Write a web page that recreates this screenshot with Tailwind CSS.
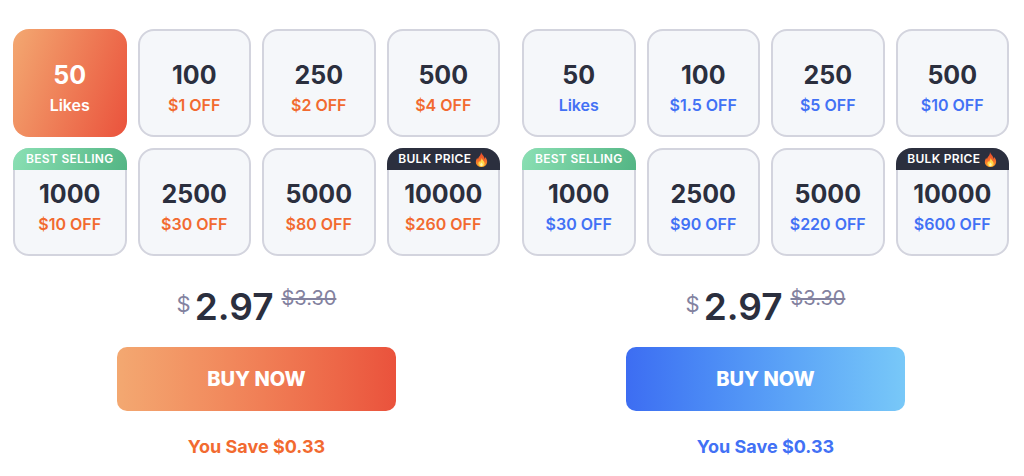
<!DOCTYPE html>
<html lang="en">
<head>
<meta charset="utf-8">
<meta name="viewport" content="width=device-width, initial-scale=1">
<title>Buy Likes</title>
<script src="https://cdn.jsdelivr.net/npm/@tailwindcss/browser@4"></script>
</head>
<body class="bg-white font-['Inter',sans-serif] text-[#2b2f3e]">
<svg class="absolute size-0" aria-hidden="true">
  <defs>
    <linearGradient id="flame-fill" x1="0" y1="0" x2="0" y2="1">
      <stop offset="0" stop-color="#e8452c"/><stop offset="0.6" stop-color="#f5702a"/><stop offset="1" stop-color="#fba52b"/>
    </linearGradient>
    <symbol id="flame" viewBox="0 0 24 28">
      <path fill="url(#flame-fill)" d="M11 0c1 4 5 6 6 10 .3 1.500 0 3 0 3 1-.6 1.600-2 1.500-3.600C21 12 23 15 22.500 19c-.6 5.500-5 9-10.500 9S1.800 24.500 1.500 19.500C1.200 15.500 3 13 4 10.500c.7 1 .8 2.300 1.500 3.200C6 9 11.500 6.500 11 0z"/>
      <path fill="#ffd84a" d="M12.500 11c.2 3.200 4.800 5.500 5.300 9.800.3 3.700-2.400 6.200-5.800 6.200s-6-2.300-5.800-5.800c.1-1.700.9-3 1.800-4.200.3 1 .7 1.600 1.400 2 .1-3 2.900-4.500 3.100-8z"/>
      <path fill="#fff3b0" d="M12 19c.4 1.800 2.400 2.700 2.400 4.800 0 1.600-1.100 2.700-2.500 2.700s-2.500-1.100-2.500-2.600c0-2 2.200-2.900 2.600-4.900z"/>
    </symbol>
  </defs>
</svg>
<main class="grid grid-cols-2 gap-[22px] pt-[29px] pr-[15px] pl-[13px]">

  <section aria-label="Likes, orange plan" class="flex flex-col items-center">
    <div class="grid w-full grid-cols-4 gap-[11px] text-base leading-6 font-semibold text-[#f26a30]">
      <button type="button" aria-pressed="true" class="flex h-[108px] flex-col items-center justify-center rounded-2xl bg-linear-[110deg] from-[#f3a871] to-[#ea523c] pt-[7px] text-white"><span class="text-[25px] leading-9 font-bold">50</span><span>Likes</span></button>
      <button type="button" class="flex h-[108px] flex-col items-center justify-center rounded-2xl border-2 border-[#d3d4de] bg-[#f5f7fa] pt-[7px]"><span class="text-[25px] leading-9 font-bold text-[#2b2f3e]">100</span><span>$1 OFF</span></button>
      <button type="button" class="flex h-[108px] flex-col items-center justify-center rounded-2xl border-2 border-[#d3d4de] bg-[#f5f7fa] pt-[7px]"><span class="text-[25px] leading-9 font-bold text-[#2b2f3e]">250</span><span>$2 OFF</span></button>
      <button type="button" class="flex h-[108px] flex-col items-center justify-center rounded-2xl border-2 border-[#d3d4de] bg-[#f5f7fa] pt-[7px]"><span class="text-[25px] leading-9 font-bold text-[#2b2f3e]">500</span><span>$4 OFF</span></button>
      <button type="button" class="relative flex h-[108px] flex-col items-center justify-center rounded-2xl border-2 border-[#d3d4de] bg-[#f5f7fa] pt-[7px]"><span class="absolute -inset-x-0.5 -top-0.5 flex h-[22px] items-center justify-center rounded-t-2xl bg-linear-[110deg] from-[#8be0b4] to-[#53b584] text-xs tracking-wide whitespace-nowrap text-white">BEST SELLING</span><span class="text-[25px] leading-9 font-bold text-[#2b2f3e]">1000</span><span>$10 OFF</span></button>
      <button type="button" class="flex h-[108px] flex-col items-center justify-center rounded-2xl border-2 border-[#d3d4de] bg-[#f5f7fa] pt-[7px]"><span class="text-[25px] leading-9 font-bold text-[#2b2f3e]">2500</span><span>$30 OFF</span></button>
      <button type="button" class="flex h-[108px] flex-col items-center justify-center rounded-2xl border-2 border-[#d3d4de] bg-[#f5f7fa] pt-[7px]"><span class="text-[25px] leading-9 font-bold text-[#2b2f3e]">5000</span><span>$80 OFF</span></button>
      <button type="button" class="relative flex h-[108px] flex-col items-center justify-center rounded-2xl border-2 border-[#d3d4de] bg-[#f5f7fa] pt-[7px]"><span class="absolute -inset-x-0.5 -top-0.5 flex h-[22px] items-center justify-center gap-1 rounded-t-2xl bg-[#2b2f3e] text-xs tracking-wide whitespace-nowrap text-white">BULK PRICE<svg class="h-[15px] w-[13px]" aria-hidden="true"><use href="#flame"/></svg></span><span class="text-[25px] leading-9 font-bold text-[#2b2f3e]">10000</span><span>$260 OFF</span></button>
    </div>
    <p class="mt-7 flex items-start justify-center text-[#83829f]">
      <span class="mt-1 mr-1 text-[22px] leading-8">$</span>
      <strong class="text-[37px] leading-[46px] font-semibold text-[#2b2f3e]">2.97</strong>
      <s class="ml-2 text-xl leading-7">$3.30</s>
    </p>
    <button type="button" class="mt-[17px] h-16 w-[279px] rounded-[10px] bg-linear-to-r from-[#f3a871] to-[#ea523c] text-xl font-extrabold text-white">BUY NOW</button>
    <p class="mt-[22px] text-lg leading-7 font-bold text-[#f26a30]">You Save $0.33</p>
  </section>

  <section aria-label="Likes, blue plan" class="flex flex-col items-center">
    <div class="grid w-full grid-cols-4 gap-[11px] text-base leading-6 font-semibold text-[#4271f5]">
      <button type="button" class="flex h-[108px] flex-col items-center justify-center rounded-2xl border-2 border-[#d3d4de] bg-[#f5f7fa] pt-[7px]"><span class="text-[25px] leading-9 font-bold text-[#2b2f3e]">50</span><span>Likes</span></button>
      <button type="button" class="flex h-[108px] flex-col items-center justify-center rounded-2xl border-2 border-[#d3d4de] bg-[#f5f7fa] pt-[7px]"><span class="text-[25px] leading-9 font-bold text-[#2b2f3e]">100</span><span>$1.5 OFF</span></button>
      <button type="button" class="flex h-[108px] flex-col items-center justify-center rounded-2xl border-2 border-[#d3d4de] bg-[#f5f7fa] pt-[7px]"><span class="text-[25px] leading-9 font-bold text-[#2b2f3e]">250</span><span>$5 OFF</span></button>
      <button type="button" class="flex h-[108px] flex-col items-center justify-center rounded-2xl border-2 border-[#d3d4de] bg-[#f5f7fa] pt-[7px]"><span class="text-[25px] leading-9 font-bold text-[#2b2f3e]">500</span><span>$10 OFF</span></button>
      <button type="button" class="relative flex h-[108px] flex-col items-center justify-center rounded-2xl border-2 border-[#d3d4de] bg-[#f5f7fa] pt-[7px]"><span class="absolute -inset-x-0.5 -top-0.5 flex h-[22px] items-center justify-center rounded-t-2xl bg-linear-[110deg] from-[#8be0b4] to-[#53b584] text-xs tracking-wide whitespace-nowrap text-white">BEST SELLING</span><span class="text-[25px] leading-9 font-bold text-[#2b2f3e]">1000</span><span>$30 OFF</span></button>
      <button type="button" class="flex h-[108px] flex-col items-center justify-center rounded-2xl border-2 border-[#d3d4de] bg-[#f5f7fa] pt-[7px]"><span class="text-[25px] leading-9 font-bold text-[#2b2f3e]">2500</span><span>$90 OFF</span></button>
      <button type="button" class="flex h-[108px] flex-col items-center justify-center rounded-2xl border-2 border-[#d3d4de] bg-[#f5f7fa] pt-[7px]"><span class="text-[25px] leading-9 font-bold text-[#2b2f3e]">5000</span><span>$220 OFF</span></button>
      <button type="button" class="relative flex h-[108px] flex-col items-center justify-center rounded-2xl border-2 border-[#d3d4de] bg-[#f5f7fa] pt-[7px]"><span class="absolute -inset-x-0.5 -top-0.5 flex h-[22px] items-center justify-center gap-1 rounded-t-2xl bg-[#2b2f3e] text-xs tracking-wide whitespace-nowrap text-white">BULK PRICE<svg class="h-[15px] w-[13px]" aria-hidden="true"><use href="#flame"/></svg></span><span class="text-[25px] leading-9 font-bold text-[#2b2f3e]">10000</span><span>$600 OFF</span></button>
    </div>
    <p class="mt-7 flex items-start justify-center text-[#83829f]">
      <span class="mt-1 mr-1 text-[22px] leading-8">$</span>
      <strong class="text-[37px] leading-[46px] font-semibold text-[#2b2f3e]">2.97</strong>
      <s class="ml-2 text-xl leading-7">$3.30</s>
    </p>
    <button type="button" class="mt-[17px] h-16 w-[279px] rounded-[10px] bg-linear-to-r from-[#3d6df2] to-[#78c8f8] text-xl font-extrabold text-white">BUY NOW</button>
    <p class="mt-[22px] text-lg leading-7 font-bold text-[#4271f5]">You Save $0.33</p>
  </section>
</main>
</body>
</html>
